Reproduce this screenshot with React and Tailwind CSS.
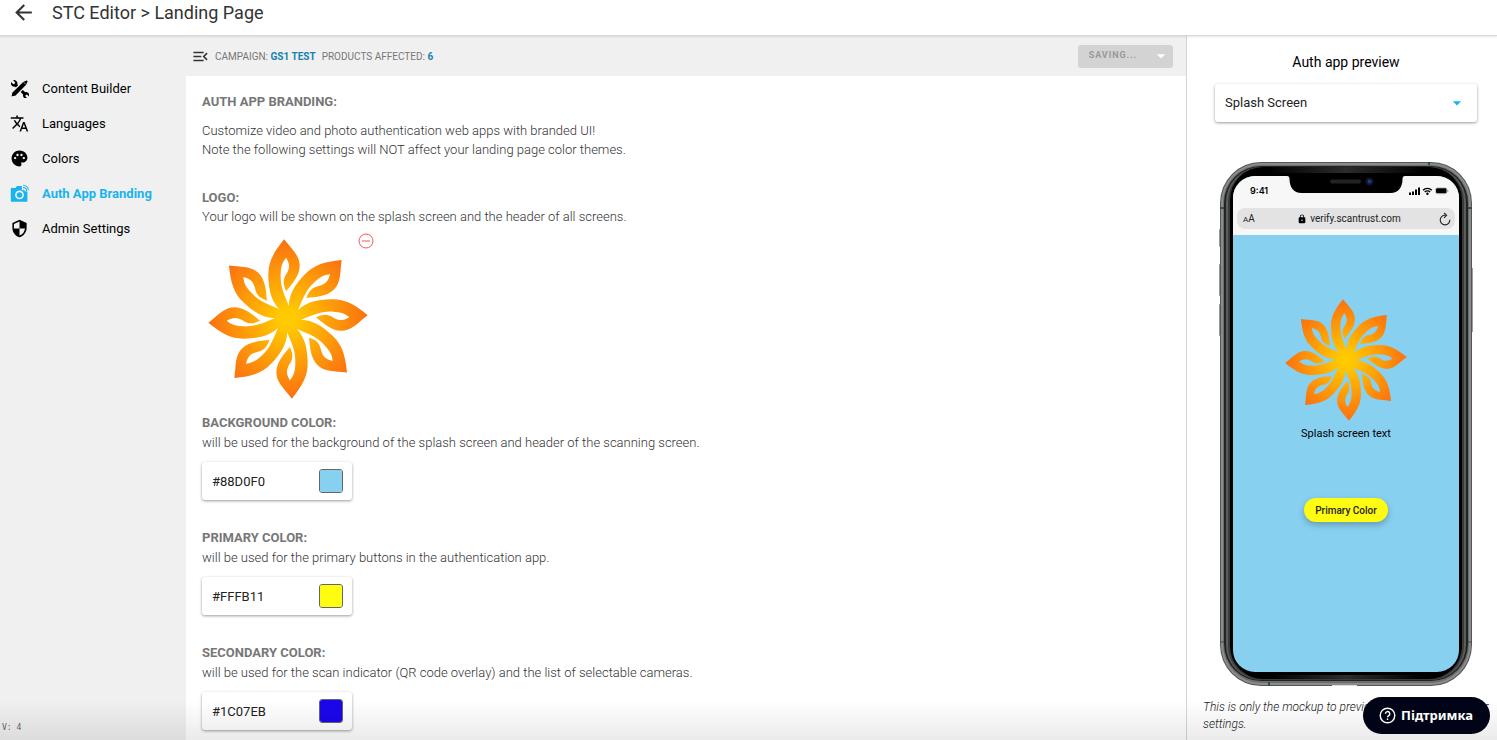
import React, { useState } from 'react'
import {
  MdArrowBack, MdArrowDropDown, MdLock, MdMenuOpen, MdPalette, MdSecurity, MdTranslate,
} from 'react-icons/md'

const PETAL = 'M-11.5-239C-45-198-60-170-59-130C-58-85-50-56-27-30L0 6L2.5-40C-12-75-24-100-22-135C-21-160-17-170-5.5-184C5-165 6-155-3-138C-16-118-16-108-5.5-84C12-105 35-130 35-160C35-190 14-206-11.5-239Z'

const petalAngles = [0, 45, 90, 135, 180, 225, 270, 315]

const screenOptions = ['Splash Screen', 'Scanning Screen', 'Result Screen']

function ContentBuilderIcon({ className }) {
  return (
    <svg viewBox="0 0 24 24" fill="currentColor" className={className} aria-hidden="true">
      <path d="M4 1.500l2.500 2.800-.5 1.700-1.800.5-2.700-2.600c-.7 2-.1 3.800 1.200 4.900 1.100 1 2.500 1.200 3.900.9l10 10c-.4 1.500 0 2.900 1 3.900 1.200 1.100 2.700 1.300 4.300.8l-2.500-2.700.4-1.600 1.700-.4 2.500 2.300c.5-1.600.3-3.200-.9-4.400-1.100-1-2.600-1.300-3.900-.8L9.300 6.800c.3-1.500 0-2.900-1-3.900C7.200 1.700 5.700 1.200 4 1.500z" />
      <path d="M.8 23.200l1.500-6.400L16.400 3l4.800-2.200 2.100 2L21 7.700 7.300 21.600z" stroke="#f0f0f0" strokeWidth="1.600" />
      <path d="M17.500 4.200l2.600 2.600" stroke="#f0f0f0" strokeWidth=".8" />
    </svg>
  )
}

function CameraWirelessIcon({ className }) {
  return (
    <svg viewBox="0 0 24 24" fill="currentColor" className={className} aria-hidden="true">
      <path fillRule="evenodd" d="M3 5h4l1.800-2.500H15V7.500l2 .8L18.500 9 22 9.500V21a1.500 1.500 0 0 1-1.500 1.500h-18A1.500 1.500 0 0 1 1 21V6.500A1.500 1.500 0 0 1 3 5zm9 3.200a5.600 5.600 0 1 0 0 11.200 5.600 5.600 0 0 0 0-11.200z" />
      <circle cx="12" cy="13.800" r="3.500" />
      <path d="M16.500 7.500a1.500 1.500 0 0 1 1.500 1.500M16.500 4.500A4.500 4.500 0 0 1 21 9M16.500 1.500A7 7 0 0 1 23.300 8" fill="none" stroke="currentColor" strokeWidth="1.300" />
    </svg>
  )
}

function FlowerLogo({ id, className }) {
  return (
    <svg viewBox="-240 -240 480 480" className={className} role="img" aria-label="Logo">
      <defs>
        <radialGradient id={id} gradientUnits="userSpaceOnUse" cx="0" cy="0" r="240">
          <stop offset="0" stopColor="#ffcc00" />
          <stop offset="0.12" stopColor="#ffc800" />
          <stop offset="1" stopColor="#fb7011" />
        </radialGradient>
      </defs>
      <g fill={`url(#${id})`}>
        {petalAngles.map((angle) => (
          <path key={angle} d={PETAL} transform={`rotate(${angle})`} />
        ))}
        <circle r="38" />
      </g>
    </svg>
  )
}

const menuItems = [
  { label: 'Content Builder', Icon: ContentBuilderIcon },
  { label: 'Languages', Icon: MdTranslate },
  { label: 'Colors', Icon: MdPalette },
  { label: 'Auth App Branding', Icon: CameraWirelessIcon, active: true },
  { label: 'Admin Settings', Icon: MdSecurity },
]

const colorSettings = [
  {
    key: 'background',
    title: 'BACKGROUND COLOR:',
    text: 'will be used for the background of the splash screen and header of the scanning screen.',
  },
  {
    key: 'primary',
    title: 'PRIMARY COLOR:',
    text: 'will be used for the primary buttons in the authentication app.',
  },
  {
    key: 'secondary',
    title: 'SECONDARY COLOR:',
    text: 'will be used for the scan indicator (QR code overlay) and the list of selectable cameras.',
  },
]

function Sidebar() {
  return (
    <aside className="flex w-[186px] shrink-0 flex-col justify-between bg-[#f0f0f0] pt-[35px]">
      <nav>
        {menuItems.map(({ label, Icon, active }) => (
          <a
            key={label}
            href="#"
            className={`flex h-[35px] items-center gap-[13px] pl-[10px] text-[13px] ${active ? 'font-bold text-[#19b4ee]' : 'text-black'}`}
          >
            <Icon className="size-[19px]" />
            {label}
          </a>
        ))}
      </nav>
      <div className="pb-[6px] pl-[2px] font-['DejaVu_Sans_Mono',monospace] text-[8px] text-[#666]">V: 4</div>
    </aside>
  )
}

function TopBar() {
  return (
    <div className="flex h-[40px] shrink-0 items-center justify-between bg-[#f0f0f0] pr-[13px] pl-[5px]">
      <div className="flex items-center text-[10px] text-[#777]">
        <button type="button" aria-label="Collapse menu" className="mr-[5px] text-[#333]">
          <MdMenuOpen className="size-[19px]" />
        </button>
        <span className="mr-[6px]">
          CAMPAIGN: <b className="text-[#1583ad]">GS1 TEST</b>
        </span>
        <span>
          PRODUCTS AFFECTED: <b className="text-[#1583ad]">6</b>
        </span>
      </div>
      <button type="button" disabled className="flex h-[23px] items-center gap-[14px] rounded-[3px] bg-[#d3d3d3] pr-[2px] pl-[11px] text-[9px] font-bold tracking-widest text-[#999]">
        SAVING...
        <MdArrowDropDown className="size-5 text-white" />
      </button>
    </div>
  )
}

function ColorField({ id, title, text, value, onChange }) {
  return (
    <section className="mb-7">
      <label htmlFor={id} className="block font-bold text-[#777]">{title}</label>
      <p className="mt-px">{text}</p>
      <div className="mt-[10px] flex h-[38px] w-[150px] items-center justify-between rounded-[3px] bg-white pr-[9px] pl-[10px] shadow-[0_1px_3px_rgba(0,0,0,0.4)]">
        <input
          id={id}
          type="text"
          value={value}
          onChange={(e) => onChange(e.target.value)}
          className="w-20 font-normal text-[#222] outline-none"
        />
        <input
          type="color"
          aria-label={title}
          value={value.toLowerCase()}
          onChange={(e) => onChange(e.target.value.toUpperCase())}
          className="size-6 overflow-hidden rounded-[3px] border border-black/60 [&::-webkit-color-swatch]:border-0 [&::-webkit-color-swatch-wrapper]:p-0"
        />
      </div>
    </section>
  )
}

function PhoneFrame() {
  return (
    <svg viewBox="0 0 254 524" className="absolute inset-0 size-full" aria-hidden="true">
      <defs>
        <linearGradient id="bezel" x1="0" y1="0" x2="1" y2="0">
          <stop offset="0" stopColor="#000" />
          <stop offset="0.5" stopColor="#2c2c2c" />
          <stop offset="1" stopColor="#000" />
        </linearGradient>
      </defs>
      <rect x="0" y="67" width="2" height="18" rx="1" fill="#999" />
      <rect x="0" y="102" width="2" height="32" rx="1" fill="#999" />
      <rect x="0" y="142" width="2" height="32" rx="1" fill="#999" />
      <rect x="252" y="106" width="2.500" height="64" rx="1" fill="#9b9b98" />
      <rect x="1" y="0" width="252" height="524" rx="41" fill="#555756" />
      <rect x="2" y="1" width="250" height="522" rx="40" fill="#8a8c8b" />
      <rect x="4" y="3" width="246" height="518" rx="38" fill="#6c6e6d" />
      <rect x="5" y="4" width="244" height="515" rx="37" fill="#222423" />
      <rect x="7" y="5" width="240" height="513" rx="35" fill="#5c5e5d" />
      <rect x="9" y="5" width="236" height="513" rx="34" fill="#3a3c3b" />
      <rect x="11" y="5" width="232" height="512" rx="33" fill="#000" />
      <rect x="50" y="5" width="154" height="6" fill="url(#bezel)" />
      <rect x="50" y="513" width="154" height="4" fill="url(#bezel)" />
      <path d="M1 46h4M249 46h4M210 0v3M50 520v4" stroke="#31504a" strokeWidth="2" />
      <path d="M1 480h4M249 480h4" stroke="#444" strokeWidth="1" />
      <path d="M113 523.500h25" stroke="#ddd" />
    </svg>
  )
}

function Notch() {
  return (
    <svg viewBox="0 0 118 18" className="absolute top-[13px] left-[68px] h-[18px] w-[118px]" aria-hidden="true">
      <path d="M0 0h118v1c-1.600 0-2.500 1-2.500 3 0 8-4 14-12 14H14.500c-8 0-12-6-12-14 0-2-.9-3-2.500-3z" />
      <rect x="43" y="4.500" width="31" height="4" rx="2" fill="#222" />
      <circle cx="82.500" cy="6.500" r="4" fill="#101327" />
      <circle cx="82.500" cy="6.500" r="2" fill="#173c8a" />
    </svg>
  )
}

function StatusIcons() {
  return (
    <svg viewBox="0 0 40 8" className="h-2 w-10" aria-hidden="true">
      <path d="M0 5.500h2V8H0zM3 4.500h2V8H3zM6 2.500h2V8H6zM9 .500h2V8H9z" />
      <path d="M14 3.200a6 6 0 0 1 8.800 0M15.700 5a3.600 3.600 0 0 1 5.400 0" fill="none" stroke="#000" strokeWidth="1.300" />
      <circle cx="18.400" cy="6.700" r="1.200" />
      <rect x="26.500" y=".8" width="11.500" height="6" rx="1.800" fill="none" stroke="#aaa" strokeWidth=".6" />
      <rect x="27" y="1.300" width="10.500" height="5" rx="1.200" />
      <path d="M38.800 3v2" stroke="#999" />
    </svg>
  )
}

function Phone({ background, primary }) {
  return (
    <div className="relative mx-auto mt-10 w-[254px] px-[14px] pt-[14px] pb-[14px]">
      <PhoneFrame />
      <div className="relative flex h-[496px] flex-col overflow-hidden rounded-[22px]" style={{ backgroundColor: background }}>
        <div className="bg-[#f7f7f7] px-1 pb-[6px]">
          <div className="flex h-8 items-center justify-between pr-[6px] pb-[2px] pl-[13px] font-['Inter',sans-serif] text-[9px] font-semibold text-black">
            9:41
            <StatusIcons />
          </div>
          <div className="flex h-[21px] items-center justify-between rounded-[8px] bg-[#e3e3e3] pr-1 pl-[6px] text-[10px] text-[#222]">
            <span className="w-4"><span className="text-[8px]">A</span>A</span>
            <span className="flex items-center gap-[3px]">
              <MdLock className="size-[10px] text-black" />
              verify.scantrust.com
            </span>
            <svg viewBox="0 0 12 14" className="h-[14px] w-3" fill="none" stroke="#222" strokeWidth="1.100" aria-hidden="true">
              <path d="M10.800 7.800A4.800 4.800 0 1 1 6.500 3.300M5 .800l2.600 2.500L5 5.800" />
            </svg>
          </div>
        </div>
        <div className="flex flex-col items-center pt-16">
          <FlowerLogo id="logo-preview" className="size-[122px]" />
          <p className="mt-[5px] text-[11px] leading-[16px] text-black">Splash screen text</p>
          <button
            type="button"
            className="mt-14 h-6 rounded-full px-[11px] text-[10px] font-medium text-[#222] shadow-[0_3px_6px_rgba(0,0,0,0.25)]"
            style={{ backgroundColor: primary }}
          >
            Primary Color
          </button>
        </div>
      </div>
      <Notch />
    </div>
  )
}

export default function App() {
  const [colors, setColors] = useState({
    background: '#88D0F0',
    primary: '#FFFB11',
    secondary: '#1C07EB',
  })
  const [screen, setScreen] = useState('Splash Screen')

  return (
    <div className="flex h-screen flex-col overflow-hidden bg-white font-['Roboto',sans-serif]">
      <header className="z-10 flex h-[36px] shrink-0 items-center gap-[16px] border-b border-[#d8d8d8] bg-white pb-[10px] pl-[11px] text-[#333] shadow-[0_1px_2px_rgba(0,0,0,0.1)]">
        <a href="#" aria-label="Back"><MdArrowBack className="size-[25px]" /></a>
        <h1 className="text-[18px]">STC Editor &gt; Landing Page</h1>
      </header>

      <div className="flex min-h-0 grow">
        <Sidebar />

        <div className="flex min-w-0 grow flex-col">
          <TopBar />
          <main className="min-h-0 grow overflow-hidden px-4 pt-4 text-[13px] leading-[19px] font-light text-[#333]">
            <h2 className="font-bold text-[#777]">AUTH APP BRANDING:</h2>
            <p className="mt-[10px]">
              Customize video and photo authentication web apps with branded UI!
              <br />
              Note the following settings will NOT affect your landing page color themes.
            </p>

            <section className="mt-[29px] mb-[14px]">
              <h3 className="font-bold text-[#777]">LOGO:</h3>
              <p>Your logo will be shown on the splash screen and the header of all screens.</p>
              <div className="relative mt-[13px] ml-[6px] w-[160px]">
                <FlowerLogo id="logo-main" className="size-[160px]" />
                <button type="button" aria-label="Remove logo" className="absolute -top-[6px] -right-[6px]">
                  <svg viewBox="0 0 16 16" className="size-4" fill="none" stroke="#f0575c" aria-hidden="true">
                    <circle cx="8" cy="8" r="7" />
                    <path d="M4 8h8" />
                  </svg>
                </button>
              </div>
            </section>

            {colorSettings.map(({ key, title, text }) => (
              <ColorField
                key={key}
                id={key}
                title={title}
                text={text}
                value={colors[key]}
                onChange={(value) => setColors({ ...colors, [key]: value })}
              />
            ))}
          </main>
        </div>

        <aside className="w-[311px] shrink-0 overflow-hidden border-l border-[#d5d5d5] bg-white">
          <div className="pt-[15px] pr-5 pl-7">
            <label htmlFor="screen" className="block text-center text-[14px] leading-[22px] text-black">Auth app preview</label>
            <div className="relative mt-[11px]">
              <select
                id="screen"
                value={screen}
                onChange={(e) => setScreen(e.target.value)}
                className="h-[38px] w-full appearance-none rounded-[3px] bg-white px-[10px] text-[13px] text-[#222] shadow-[0_1px_3px_rgba(0,0,0,0.4)]"
              >
                {screenOptions.map((name) => <option key={name}>{name}</option>)}
              </select>
              <MdArrowDropDown className="pointer-events-none absolute top-[9px] right-[10px] size-5 text-[#19b4ee]" />
            </div>
            <Phone background={colors.background} primary={colors.primary} />
          </div>
          <p className="mt-[13px] pl-4 text-[12px] leading-[17px] font-light text-[#222] italic">
            This is only the mockup to preview the effects of all your settings.
          </p>
        </aside>
      </div>

      <div className="pointer-events-none fixed inset-x-0 bottom-0 h-10 bg-linear-to-t from-black/8 to-transparent" />

      <button type="button" className="fixed right-[7px] bottom-[6px] flex h-[37px] items-center gap-[5px] rounded-full bg-[#000416] pr-[17px] pl-[16px] font-['Noto_Sans',sans-serif] text-[13px] font-bold text-white">
        <svg viewBox="0 0 18 18" className="size-[17px]" fill="none" stroke="currentColor" strokeWidth="1.500" aria-hidden="true">
          <circle cx="9" cy="9" r="7.700" />
          <path d="M6.800 7.200a2.300 2.300 0 1 1 3.500 1.900c-.8.5-1.300.9-1.300 1.700M9 12.300v1.500" />
        </svg>
        Підтримка
      </button>
    </div>
  )
}
